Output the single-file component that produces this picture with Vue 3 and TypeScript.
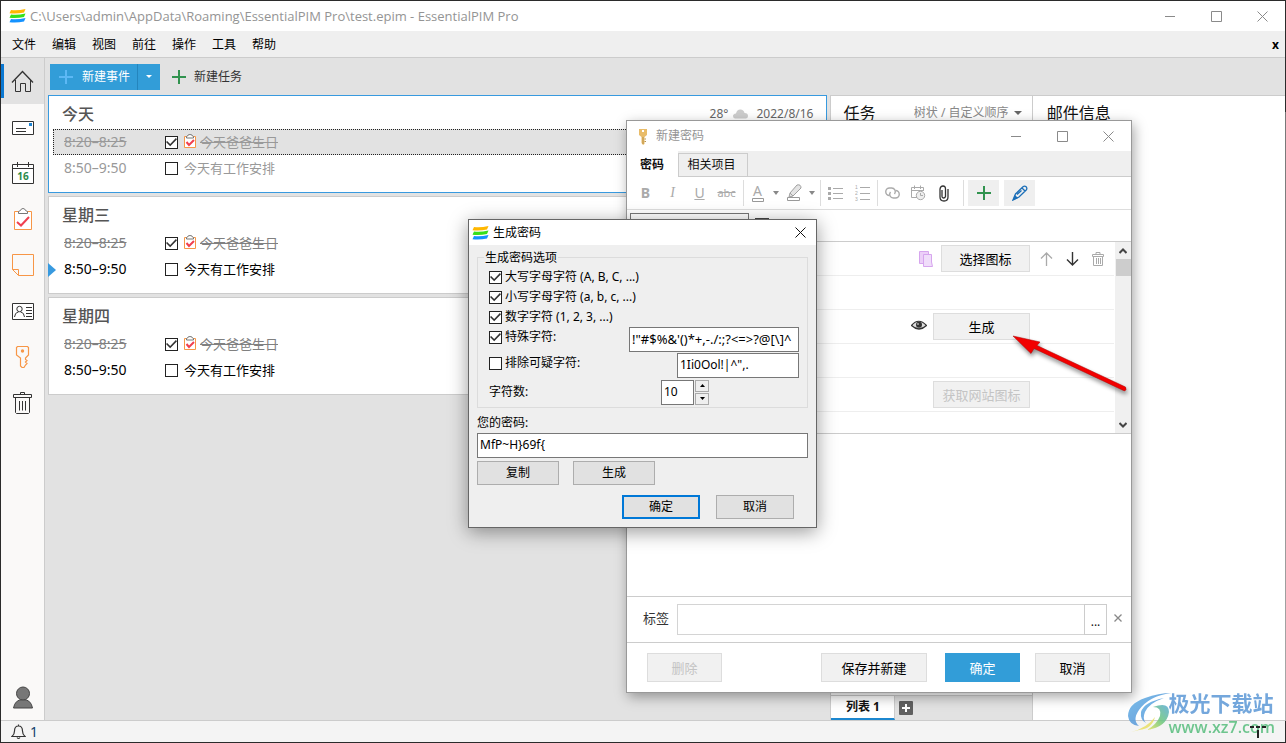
<script setup lang="ts">
import { ref } from 'vue'

interface EventRow {
  time: string
  text: string
  done: boolean
  selected?: boolean
  muted?: boolean
  now?: boolean
}
interface DayCard {
  title: string
  today?: boolean
  rows: EventRow[]
}

const menus: string[] = ['文件', '编辑', '视图', '前往', '操作', '工具', '帮助']

const days = ref<DayCard[]>([
  {
    title: '今天',
    today: true,
    rows: [
      { time: '8:20–8:25', text: '今天爸爸生日', done: true, selected: true },
      { time: '8:50–9:50', text: '今天有工作安排', done: false, muted: true },
    ],
  },
  {
    title: '星期三',
    rows: [
      { time: '8:20–8:25', text: '今天爸爸生日', done: true },
      { time: '8:50–9:50', text: '今天有工作安排', done: false, now: true },
    ],
  },
  {
    title: '星期四',
    rows: [
      { time: '8:20–8:25', text: '今天爸爸生日', done: true },
      { time: '8:50–9:50', text: '今天有工作安排', done: false },
    ],
  },
])

const upper = ref(true)
const lower = ref(true)
const digits = ref(true)
const special = ref(true)
const exclude = ref(false)
const specialChars = ref('!"#$%&\'()*+,-./:;?<=>?@[\\]^')
const similarChars = ref('1Ii0Ool!|^",.')
const count = ref('10')
const password = ref('MfP~H}69f{')
const tags = ref('')
</script>

<template>
  <div class="desktop">
    <div class="app">
      <header class="titlebar">
        <svg class="logo" width="17" height="14" viewBox="0 0 17 14">
          <path d="M2 1 Q8 2 16.500 0 L15 3.500 Q8 5 .500 4.200Z" fill="#ffb700" />
          <path d="M2 5.500 Q8 6.500 16.500 4.500 L15 8 Q8 9.500 .500 8.700Z" fill="#37e01c" />
          <path d="M2 10 Q8 11 16.500 9 L15 12.500 Q8 14 .500 13.200Z" fill="#1492ff" />
        </svg>
        <span class="path">C:\Users\admin\AppData\Roaming\EssentialPIM Pro\test.epim - EssentialPIM Pro</span>
        <div class="winctl">
          <button aria-label="最小化"><svg width="11" height="11"><path d="M0 5.500H10" /></svg></button>
          <button aria-label="最大化"><svg width="11" height="11"><path d="M.500 .500H10.500V10.500H.500Z" /></svg></button>
          <button aria-label="关闭"><svg width="11" height="11"><path d="M.500 .500L10.500 10.500M10.500 .500L.500 10.500" /></svg></button>
        </div>
      </header>

      <nav class="menubar">
        <button v-for="m in menus" :key="m">{{ m }}</button>
        <button class="closex">x</button>
      </nav>

      <div class="body">
        <aside class="side">
          <button class="active" aria-label="今天">
            <svg width="23" height="24"><g fill="none" stroke="#333"><path d="M1 13.500L11.500 2.500L22 13.500" stroke-width="1.300" /><path d="M4.500 11V22.500H9.500V14.500H14.500V22.500H19.500V11" /></g></svg>
          </button>
          <button aria-label="邮件">
            <svg width="23" height="24"><g fill="none" stroke="#333"><path d="M1.500 6.500H22.500V19.500H1.500Z" fill="#fff" /><path d="M5 13.500H15M5 16.500H15" /></g><rect x="18" y="8" width="3" height="3" fill="#1c83d2" /></svg>
          </button>
          <button aria-label="日历">
            <svg width="23" height="24"><g fill="none" stroke="#333"><path d="M1.500 3.500H22.500V22.500H1.500Z" fill="#fff" /><path d="M1.500 7.500H22.500M6.500 1V6M17.500 1V6" /></g><text x="12" y="19" class="caltext">16</text></svg>
          </button>
          <button aria-label="任务">
            <svg width="23" height="24"><path d="M3.500 4.500H20.500V22.500H3.500Z" fill="#fff" stroke="#f79646" /><path d="M7.500 6.500V4.500L9.500 3.500Q10 1.500 12 1.500T14.500 3.500L16.500 4.500V6.500Z" fill="#fff" stroke="#777" /><path d="M6 15L10 18.500L18 10" fill="none" stroke="#f04050" stroke-width="2" /></svg>
          </button>
          <button aria-label="便笺">
            <svg width="23" height="24"><path d="M1.500 1.500H22.500V22.500H7.500L1.500 16.500ZM1.500 16.500H7.500V22.500" fill="none" stroke="#f79646" /></svg>
          </button>
          <button aria-label="联系人">
            <svg width="23" height="24"><g fill="none" stroke="#333"><path d="M1.500 4.500H22.500V20.500H1.500Z" fill="#fff" /><circle cx="8.500" cy="10" r="2.700" /><path d="M3.500 18L4.500 15Q5 13.500 7.500 13M13.500 18L12.500 15Q12 13.500 9.500 13M15 8.500H21M15 11.500H21M15 14.500H21M15 17.500H21" /></g></svg>
          </button>
          <button aria-label="密码">
            <svg width="23" height="24"><path d="M6.500 1.500H16.500L17.500 2.500V10L14.500 13V14.500L16 15.500L14.500 17L16 18.500L14.500 20L13 22.500H11L9.500 21V13L5.500 10V2.500Z" fill="none" stroke="#f79646" stroke-width="1.200" /><circle cx="11.500" cy="6" r="1.700" fill="#f79646" /></svg>
          </button>
          <button aria-label="回收站">
            <svg width="23" height="24"><path d="M2.500 3.500H20.500V6.500H2.500ZM9.500 3.500V1.500H13.500V3.500M4.500 6.500V21.500L5.500 22.500H17.500L18.500 21.500V6.500M8.500 10V19.500M11.500 10V19.500M14.500 10V19.500" fill="none" stroke="#333" /></svg>
          </button>
          <button class="user" aria-label="账户">
            <svg width="23" height="24"><g fill="#777" stroke="#444"><path d="M2.500 23Q4 14.500 12 14.500T21.500 23Z" /><circle cx="12" cy="8.500" r="6.500" /></g></svg>
          </button>
        </aside>

        <main class="main">
          <div class="toolbar">
            <div class="split">
              <button class="new"><svg width="14" height="14"><path d="M7 0V14M0 7H14" stroke="#5cb8f5" stroke-width="2" /></svg>新建事件</button>
              <button class="drop" aria-label="更多"><svg width="6" height="3"><path d="M0 0H6L3 3Z" fill="#fff" /></svg></button>
            </div>
            <button class="newtask"><svg width="14" height="14"><path d="M7 0V14M0 7H14" stroke="#31934f" stroke-width="2" /></svg>新建任务</button>
          </div>

          <div class="panels">
            <section class="days">
              <article v-for="d in days" :key="d.title" class="card" :class="{ today: d.today }">
                <div class="dayhead">
                  <h2>{{ d.title }}</h2>
                  <div v-if="d.today" class="weather">
                    <span>28°</span>
                    <svg width="15" height="10"><path d="M2 9.500Q0 9 0 7Q0 5 3 4.500Q4 0 8 .500Q11 1 11.500 4Q15 4 15 7Q15 9 13 9.500Z" fill="#ccc" /></svg>
                    <span>2022/8/16</span>
                  </div>
                </div>
                <div v-for="r in d.rows" :key="r.time" class="event" :class="{ selected: r.selected, done: r.done, muted: r.muted }">
                  <svg v-if="r.now" class="now" width="8" height="14"><path d="M0 0L8 7L0 14Z" fill="#389adf" /></svg>
                  <span class="time">{{ r.time }}</span>
                  <label>
                    <input v-model="r.done" type="checkbox" />
                    <svg v-if="r.done" width="12" height="14"><path d="M.500 2.500H11.500V13.500H.500Z" fill="#fff" stroke="#f79646" /><path d="M2.500 4V2.500Q4 2 4 1Q6 0 8 1Q8 2 9.500 2.500V4Z" fill="#fff" stroke="#777" /><path d="M2.500 8L5 11L10 6" fill="none" stroke="#f04050" stroke-width="2" /></svg>
                    <span>{{ r.text }}</span>
                  </label>
                </div>
              </article>
            </section>

            <section class="tasks">
              <div class="panelhead">
                <h2>任务</h2>
                <label class="order">
                  <select aria-label="排序"><option>树状 / 自定义顺序</option></select>
                  <svg width="8" height="4"><path d="M0 0H8L4 4Z" fill="#666" /></svg>
                </label>
              </div>
              <div class="listtabs">
                <button class="on">列表 1</button>
                <button class="add" aria-label="新建列表"><svg width="14" height="14"><rect width="14" height="14" rx="1" fill="#606060" /><path d="M7 3V11M3 7H11" stroke="#fff" stroke-width="2" /></svg></button>
              </div>
            </section>

            <section class="mail"><h2>邮件信息</h2></section>
          </div>
        </main>
      </div>

      <footer class="status">
        <svg width="15" height="16"><path d="M1 12.500Q3.500 10.500 3.500 7Q3.500 2 7.500 2T11.500 7Q11.500 10.500 14 12.500ZM6 13.500Q7.500 15.500 9 13.500M7.500 .500V2" fill="none" stroke="#333" stroke-width="1.200" /></svg>
        <span>1</span>
      </footer>
    </div>

    <section class="win editor">
      <header class="wintitle">
        <svg width="10" height="17"><path d="M1 1H9V7L6.500 9V16L5 17L3.500 15V9L1 7Z" fill="#e9bc69" /><rect x="4" y="2" width="2" height="2" fill="#fff" /><path d="M5 9V16M6.500 11H8M6.500 13.500H8" stroke="#b9924a" /></svg>
        <span>新建密码</span>
        <div class="winctl">
          <button aria-label="最小化"><svg width="11" height="11"><path d="M0 5.500H10" /></svg></button>
          <button aria-label="最大化"><svg width="11" height="11"><path d="M.500 .500H10.500V10.500H.500Z" /></svg></button>
          <button aria-label="关闭"><svg width="11" height="11"><path d="M.500 .500L10.500 10.500M10.500 .500L.500 10.500" /></svg></button>
        </div>
      </header>
      <div class="tabs">
        <button class="on">密码</button>
        <button>相关项目</button>
      </div>
      <div class="fmt">
        <button><b>B</b></button>
        <button><i>I</i></button>
        <button><u>U</u></button>
        <button><s>abc</s></button>
        <span class="sep"></span>
        <button class="color"><span class="glyphA">A</span><svg width="12" height="4"><path d="M.500 .500H11.500V3.500H.500Z" fill="#fff" stroke="#999" /></svg></button>
        <button class="caret" aria-label="字体颜色"><svg width="6" height="4"><path d="M0 0H6L3 4Z" fill="#888" /></svg></button>
        <button class="color" aria-label="突出显示"><svg width="16" height="18"><path d="M3 9L10 1Q14 0 14 4L6 12L2 13ZM3 9L6 12" fill="#e4e4e4" stroke="#a0a0a0" /><path d="M.500 13.500H12.500V16.500H.500Z" fill="#fff" stroke="#999" /></svg></button>
        <button class="caret narrow" aria-label="突出显示颜色"><svg width="6" height="4"><path d="M0 0H6L3 4Z" fill="#888" /></svg></button>
        <span class="sep tight"></span>
        <button aria-label="项目符号"><svg width="15" height="13"><g fill="#aaa"><rect width="3" height="3" /><rect y="5" width="3" height="3" /><rect y="10" width="3" height="3" /><path d="M5 1h10v1H5zM5 6h10v1H5zM5 11h10v1H5z" /></g></svg></button>
        <button aria-label="编号"><svg width="15" height="19"><g fill="#aaa"><text x="0" y="5" class="num">1</text><text x="0" y="11" class="num">2</text><text x="0" y="17" class="num">3</text><path d="M5 3h10v1H5zM5 9h10v1H5zM5 15h10v1H5z" /></g></svg></button>
        <span class="sep tight"></span>
        <button class="slim" aria-label="链接"><svg width="15" height="12"><g fill="none" stroke="#aaa" stroke-width="1.400"><path d="M4.500 8.500A3.700 3.700 0 0 1 4.500 1H6.500A3.700 3.700 0 0 1 9.500 7" /><path d="M10.500 3.500A3.700 3.700 0 0 1 10.500 11H8.500A3.700 3.700 0 0 1 5.500 5" /></g></svg></button>
        <button class="slim" aria-label="插入日期"><svg width="15" height="16"><g fill="none" stroke="#aaa"><path d="M7 12.500H.500V2.500H12.500V6M.500 5.500H12.500M3.500 .500V4M9.500 .500V4" /><circle cx="9.500" cy="10.500" r="4.200" fill="#eee" /><path d="M9.500 8V10.500H12" /></g></svg></button>
        <button class="slim" aria-label="附件"><svg width="10" height="17"><path d="M3 5V11.500Q3 13 4.500 13T6.500 11.500V4Q6.500 1 4 1T1 4V12Q1 16 5 16T9 12V4" fill="none" stroke="#333" stroke-width="1.300" /></svg></button>
        <span class="sep wide"></span>
        <button class="solid" aria-label="添加字段"><svg width="14" height="14"><path d="M7 0V14M0 7H14" stroke="#31934f" stroke-width="2" /></svg></button>
        <button class="solid" aria-label="编辑字段"><svg width="16" height="16"><path d="M1 15L3.500 9L11 1.800Q12.500 .500 14.200 1.800Q15.500 3.500 14.200 5L7 12ZM10 3L13 6M5 9.500L9.500 5.500" fill="none" stroke="#1c6fb8" stroke-width="1.300" /><path d="M.500 15.500L3 10L6 13Z" fill="#1c6fb8" /></svg></button>
      </div>
      <div class="fieldbar">
        <input type="text" aria-label="字段" />
        <svg width="14" height="14"><rect width="14" height="14" fill="#444" /></svg>
      </div>
      <div class="fields">
        <div class="rows">
          <div class="row">
            <svg width="15" height="16"><path d="M.500 .500H9.500V12.500H.500Z" fill="#eccff8" stroke="#d6a5ee" /><path d="M4.500 3.500H12.500V11L13.500 15.500H4.500Z" fill="#f0ddfa" stroke="#d6a5ee" /></svg>
            <button class="flat">选择图标</button>
            <div class="tools">
              <button aria-label="上移"><svg width="13" height="14"><path d="M6.500 14V1M1 6.500L6.500 1L12 6.500" fill="none" stroke="#aaa" stroke-width="1.300" /></svg></button>
              <button aria-label="下移"><svg width="13" height="14"><path d="M6.500 0V13M1 7.500L6.500 13L12 7.500" fill="none" stroke="#333" stroke-width="1.400" /></svg></button>
              <button aria-label="删除字段"><svg width="12" height="14"><path d="M.500 2.500H11.500V4.500H.500ZM4 2V.500H8V2M1.500 4.500V13.500H10.500V4.500M4.500 6V12M6.500 6V12M8.500 6V12" fill="none" stroke="#aaa" /></svg></button>
            </div>
          </div>
          <div class="row"></div>
          <div class="row">
            <svg class="eye" width="16" height="10"><path d="M.500 5.500Q7.500 -3 15.500 5.500Q8 12.500 .500 5.500Z" fill="#ddd" stroke="#333" stroke-width="1.200" /><circle cx="8" cy="4.800" r="3" fill="#333" /><circle cx="7" cy="4" r="1" fill="#aaa" /></svg>
            <button class="flat wide">生成</button>
            <div class="tools"></div>
          </div>
          <div class="row"></div>
          <div class="row">
            <button class="flat wide" disabled>获取网站图标</button>
            <div class="tools"></div>
          </div>
          <div class="row last"></div>
        </div>
        <div class="scroll">
          <svg width="8" height="6"><path d="M.500 5L4 1.500L7.500 5" fill="none" stroke="#444" stroke-width="2" /></svg>
          <div class="thumb"></div>
          <svg width="8" height="6"><path d="M.500 1L4 4.500L7.500 1" fill="none" stroke="#444" stroke-width="2" /></svg>
        </div>
      </div>
      <div class="notes"></div>
      <div class="tagrow">
        <label for="tags">标签</label>
        <input id="tags" v-model="tags" type="text" />
        <button class="more">...</button>
        <button class="clear" aria-label="清除"><svg width="8" height="8"><path d="M.500 .500L7.500 7.500M7.500 .500L.500 7.500" stroke="#888" stroke-width="1.300" /></svg></button>
      </div>
      <div class="actions">
        <button class="flat" disabled>删除</button>
        <button class="flat save">保存并新建</button>
        <button class="flat primary">确定</button>
        <button class="flat">取消</button>
      </div>
    </section>

    <section class="win gen">
      <header class="gentitle">
        <svg width="17" height="14" viewBox="0 0 17 14">
          <path d="M2 1 Q8 2 16.500 0 L15 3.500 Q8 5 .500 4.200Z" fill="#ffb700" />
          <path d="M2 5.500 Q8 6.500 16.500 4.500 L15 8 Q8 9.500 .500 8.700Z" fill="#37e01c" />
          <path d="M2 10 Q8 11 16.500 9 L15 12.500 Q8 14 .500 13.200Z" fill="#1492ff" />
        </svg>
        <span>生成密码</span>
        <button aria-label="关闭"><svg width="11" height="11"><path d="M.500 .500L10.500 10.500M10.500 .500L.500 10.500" stroke="#111" /></svg></button>
      </header>
      <div class="genbody">
        <div class="group" role="group" aria-labelledby="gl">
          <span id="gl" class="legend">生成密码选项</span>
          <label class="opt"><input v-model="upper" type="checkbox" />大写字母字符 (A, B, C, ...)</label>
          <label class="opt"><input v-model="lower" type="checkbox" />小写字母字符 (a, b, c, ...)</label>
          <label class="opt"><input v-model="digits" type="checkbox" />数字字符 (1, 2, 3, ...)</label>
          <div class="optrow">
            <label class="opt"><input v-model="special" type="checkbox" />特殊字符:</label>
            <input v-model="specialChars" class="box chars" type="text" aria-label="特殊字符" />
          </div>
          <div class="optrow">
            <label class="opt"><input v-model="exclude" type="checkbox" />排除可疑字符:</label>
            <input v-model="similarChars" class="box similar" type="text" aria-label="可疑字符" />
          </div>
          <div class="optrow low">
            <label class="opt" for="count">字符数:</label>
            <input id="count" v-model="count" class="box count" type="text" />
            <div class="spin">
              <button aria-label="增加"><svg width="5" height="3"><path d="M0 3L2.500 0L5 3Z" /></svg></button>
              <button aria-label="减少"><svg width="5" height="3"><path d="M0 0L2.500 3L5 0Z" /></svg></button>
            </div>
          </div>
        </div>
        <label class="pwlabel" for="pw">您的密码:</label>
        <input id="pw" v-model="password" class="box pw" type="text" />
        <div class="btns">
          <button>复制</button>
          <button>生成</button>
        </div>
        <div class="btns end">
          <button class="ok">确定</button>
          <button>取消</button>
        </div>
      </div>
    </section>

    <svg class="arrow" width="126" height="70" viewBox="0 0 126 70">
      <path d="M4 6L31 12L28 15.500L116.500 57Q118 60 115.500 61L25 18.500L22 23.500Z" fill="#f20000" stroke="#a00" stroke-width=".5" />
    </svg>

    <div class="brand">
      <svg width="46" height="44" viewBox="0 0 46 44">
        <defs>
          <linearGradient id="g1" x1="0" y1="0" x2="1" y2="1"><stop offset="0" stop-color="#62b5e8" /><stop offset="1" stop-color="#4e83cf" /></linearGradient>
          <linearGradient id="g2" x1="1" y1="0" x2="0" y2="1"><stop offset="0" stop-color="#58a9d8" /><stop offset=".5" stop-color="#6cc67c" /><stop offset="1" stop-color="#efe65a" /></linearGradient>
        </defs>
        <path d="M44 1Q22 4 12 18Q5 28 12 34Q2 33 1 24Q1 12 18 6Q32 1 44 1Z" fill="url(#g1)" />
        <path d="M37 6Q22 11 18 20Q15 27 19 31Q13 28 14 20Q17 10 37 6Z" fill="url(#g1)" />
        <path d="M26 15Q42 9 42 20Q40 35 20 38Q30 32 33 24Q35 15 26 15Z" fill="url(#g2)" />
        <path d="M4 40Q20 36 28 25Q25 37 12 38Q8 39 4 40Z" fill="#e9e065" />
      </svg>
      <div class="brandtext"><strong>极光下载站</strong><span>www.xz7.com</span></div>
    </div>
    <svg class="mark" width="16" height="12"><path d="M0 1H4M6 1H10M12 1H16M8 4V12" stroke="#222" stroke-width="2" /></svg>
  </div>
</template>

<style>
html,
body,
#app {
  height: 100%;
}
body {
  margin: 0;
  overflow: hidden;
}
</style>

<style scoped>
.desktop,
.desktop * {
  box-sizing: border-box;
}
.desktop {
  position: relative;
  height: 100vh;
  overflow: hidden;
  padding: 1px;
  background: linear-gradient(#2b2b2b 112px, #777 112px, #aaa calc(100% - 22px), #2b2b2b calc(100% - 22px));
  font-family: "Noto Sans", "Noto Sans CJK SC", sans-serif;
  font-size: 12px;
  line-height: 16px;
  color: #111;
}
button,
input,
select {
  font: inherit;
  color: inherit;
  margin: 0;
  padding: 0;
  border: 0;
  border-radius: 0;
  background: none;
  outline: 0;
}
svg {
  display: block;
  flex: none;
}
h2 {
  margin: 0;
  font-size: 16px;
  line-height: 24px;
  font-weight: 400;
}
.app {
  height: 100%;
  display: flex;
  flex-direction: column;
  background: #e2e2e2;
  box-shadow: -1px 0 #2b2b2b;
}
.titlebar {
  height: 30px;
  display: flex;
  align-items: center;
  padding-left: 8px;
  gap: 4px;
  background: #fff;
  color: #949494;
}
.path {
  flex: 1;
  font-family: "Open Sans", sans-serif;
  font-size: 13px;
  white-space: nowrap;
}
.winctl {
  display: flex;
  margin-left: auto;
}
.winctl button {
  width: 46px;
  height: 29px;
  display: grid;
  place-items: center;
}
.winctl path {
  fill: none;
  stroke: #8a8a8a;
}
.menubar {
  height: 27px;
  display: flex;
  align-items: center;
  padding: 2px 6px 0 11px;
  gap: 16px;
  background: #efefef;
  border-bottom: 1px solid #ccc;
  color: #000;
}
.closex {
  margin-left: auto;
  font-weight: 700;
}
.body {
  flex: 1;
  display: flex;
  min-height: 0;
}
.side {
  width: 44px;
  display: flex;
  flex-direction: column;
  background: #faf9f8;
  border-right: 1px solid #ccc;
}
.side button {
  position: relative;
  height: 46px;
  display: grid;
  place-items: center;
}
.side .active {
  background: #e2e2e2;
}
.side .active::before {
  content: "";
  position: absolute;
  left: 0;
  top: 6px;
  width: 3px;
  height: 34px;
  background: #0a78d2;
}
.side .user {
  margin-top: auto;
}
.caltext {
  font: 700 10px "Open Sans", sans-serif;
  text-anchor: middle;
  fill: #2a8a4a;
}
.main {
  flex: 1;
  display: flex;
  flex-direction: column;
  min-width: 0;
}
.toolbar {
  height: 37px;
  display: flex;
  align-items: center;
  padding-left: 5px;
  gap: 12px;
}
.split {
  display: flex;
  height: 26px;
  background: #329dd8;
  color: #fff;
}
.new,
.newtask {
  display: flex;
  align-items: center;
  gap: 8px;
}
.new {
  width: 87px;
  padding-left: 9px;
  gap: 9px;
}
.drop {
  width: 23px;
  display: grid;
  place-items: center;
  border-left: 1px solid #2485bd;
}
.newtask {
  color: #333;
}
.panels {
  flex: 1;
  display: flex;
  min-height: 0;
  padding-left: 3px;
}
.days {
  flex: 782;
  display: flex;
  flex-direction: column;
  gap: 3px;
  margin-right: 3px;
}
.card {
  height: 98px;
  background: #fff;
  border: 1px solid #ccc;
  padding-left: 4px;
}
.today {
  border-color: #389adf;
}
.dayhead {
  height: 33px;
  display: flex;
  align-items: center;
  justify-content: space-between;
  padding: 2px 13px 0 9px;
}
.dayhead h2 {
  font-weight: 500;
  color: #555;
}
.weather {
  display: flex;
  align-items: center;
  gap: 5px;
  color: #666;
}
.weather span:last-child {
  margin-left: 3px;
}
.event {
  position: relative;
  height: 26px;
  display: flex;
  align-items: center;
  padding-left: 10px;
  border: 1px solid transparent;
  font-size: 13px;
  color: #000;
}
.now {
  position: absolute;
  left: -6px;
  top: 6px;
}
.time {
  width: 101px;
  font-size: 14px;
}
.event label {
  display: flex;
  align-items: center;
  gap: 6px;
}
.event label span {
  white-space: nowrap;
}
.event label svg {
  margin: 0 -2px 3px 0;
}
.event.done {
  color: #808080;
}
.done .time,
.done label span {
  text-decoration: line-through;
}
.event.muted {
  color: #999;
}
.event.selected {
  color: #999;
  background: #e2e2e2;
  border: 1px dotted #222;
}
input[type="checkbox"] {
  appearance: none;
  width: 13px;
  height: 13px;
  flex: none;
  background: #fff;
  border: 1px solid #222;
}
input[type="checkbox"]:checked::before {
  content: "";
  display: block;
  width: 11px;
  height: 11px;
  background: #333;
  clip-path: polygon(0 50%, 10% 40%, 38% 68%, 90% 14%, 100% 24%, 38% 88%);
}
.tasks {
  flex: 201;
  display: flex;
  flex-direction: column;
  justify-content: space-between;
  background: #fff;
  border: 1px solid #ccc;
  border-width: 1px 0 0 1px;
}
.panelhead {
  display: flex;
  align-items: center;
  justify-content: space-between;
  padding: 5px 10px 0 12px;
  white-space: nowrap;
}
.order {
  display: flex;
  align-items: center;
  gap: 5px;
  color: #888;
}
.order select {
  appearance: none;
}
.listtabs {
  height: 25px;
  display: flex;
  align-items: center;
  background: #e2e2e2;
  border-top: 1px solid #ccc;
}
.listtabs .on {
  width: 64px;
  height: 24px;
  background: #fff;
  border-bottom: 2px solid #1c87cf;
  border-right: 1px solid #ccc;
  font-weight: 700;
}
.add {
  margin-left: 4px;
}
.mail {
  flex: 253;
  background: #fff;
  border: 1px solid #ccc;
  border-width: 1px 0 0 1px;
}
.mail h2 {
  margin: 5px 14px;
}
.status {
  height: 22px;
  display: flex;
  align-items: center;
  gap: 4px;
  padding-left: 10px;
  background: #f4f4f4;
  border-top: 1px solid #ccc;
  font-size: 14px;
  color: #123e6b;
}

.win {
  position: absolute;
  display: flex;
  flex-direction: column;
  background: #fff;
}
.editor {
  left: 626px;
  top: 120px;
  width: 506px;
  height: 573px;
  border: 1px solid #999;
  box-shadow: 2px 4px 12px rgba(0, 0, 0, 0.35);
}
.wintitle {
  height: 30px;
  display: flex;
  align-items: center;
  padding-left: 11px;
  gap: 8px;
  color: #949494;
}
.tabs {
  height: 26px;
  display: flex;
  align-items: flex-end;
  background: #efefef;
}
.tabs::after {
  content: "";
  flex: 1;
  border-bottom: 1px solid #ccc;
}
.tabs button {
  width: 70px;
  height: 24px;
  padding-right: 3px;
  border: 1px solid #ccc;
}
.tabs .on {
  width: 51px;
  height: 26px;
  padding: 2px 1px 0 0;
  border: 0;
  background: #fff;
  font-weight: 700;
}
.fmt {
  height: 33px;
  display: flex;
  align-items: center;
  padding-left: 5px;
  border-bottom: 1px solid #ddd;
  color: #aaa;
  font-size: 14px;
}
.fmt button {
  width: 27px;
  height: 26px;
  display: grid;
  place-items: center;
}
.fmt i {
  font-family: "Liberation Serif", serif;
}
.fmt s {
  font-size: 11px;
}
.fmt .color {
  width: 19px;
  place-content: center;
}
.glyphA {
  line-height: 14px;
}
.fmt .caret {
  width: 18px;
}
.fmt .narrow {
  width: 15px;
}
.fmt .slim {
  width: 26px;
}
.sep {
  width: 1px;
  height: 26px;
  margin: 0 4px 0 3px;
  background: #ddd;
}
.sep.tight {
  margin: 0 1px;
}
.sep.wide {
  margin: 0 4px 0 6px;
}
.fmt .solid {
  width: 31px;
  background: #efefef;
}
.solid + .solid {
  margin-left: 5px;
}
.num {
  font: 5px "Liberation Sans", sans-serif;
}
.fieldbar {
  height: 32px;
  display: flex;
  align-items: flex-start;
  gap: 6px;
  padding: 3px;
  border-bottom: 1px solid #ccc;
}
.fieldbar input {
  width: 119px;
  height: 25px;
  border: 1px solid #777;
}
.fieldbar svg {
  margin-top: 5px;
}
.fields {
  height: 192px;
  display: flex;
  gap: 1px;
  border-bottom: 1px solid #ccc;
}
.rows {
  flex: 1;
}
.row {
  height: 34px;
  display: flex;
  align-items: center;
  justify-content: flex-end;
  gap: 7px;
  border-bottom: 1px solid #eee;
}
.row.last {
  height: 21px;
  border: 0;
}
.eye {
  margin: 0 -1px 4px 0;
}
.flat {
  width: 75px;
  height: 29px;
  background: #f1f1f1;
  border: 1px solid #ddd;
  font-size: 13px;
  color: #000;
}
.flat:disabled {
  color: #c4c4c4;
}
.row .flat {
  width: 89px;
  height: 27px;
}
.row .flat.wide {
  width: 97px;
}
.tools {
  width: 77px;
  display: flex;
  align-items: center;
  gap: 13px;
  padding-left: 3px;
}
.scroll {
  width: 16px;
  display: flex;
  flex-direction: column;
  align-items: center;
  background: #f0f0f0;
  padding: 6px 0 5px;
}
.thumb {
  width: 15px;
  height: 17px;
  margin: 5px 0 auto;
  background: #cdcdcd;
}
.notes {
  flex: 1;
}
.tagrow {
  height: 47px;
  display: flex;
  align-items: center;
  padding: 0 9px 0 16px;
  border: 1px solid #ccc;
  border-width: 1px 0;
}
.tagrow label {
  width: 34px;
  padding-bottom: 4px;
  font-size: 13px;
  color: #333;
}
.tagrow input {
  flex: 1;
  height: 31px;
  border: 1px solid #d4d4d4;
}
.more {
  width: 23px;
  height: 31px;
  margin-left: -1px;
  padding-top: 5px;
  border: 1px solid #ccc;
}
.clear {
  margin-left: 7px;
  padding-bottom: 4px;
}
.actions {
  height: 49px;
  display: flex;
  align-items: center;
  gap: 15px;
  padding: 0 21px 0 20px;
}
.actions .save {
  width: 106px;
  margin-left: auto;
}
.actions .primary {
  margin-left: 3px;
  background: #329dd8;
  border-color: #329dd8;
  color: #fff;
}

.gen {
  left: 468px;
  top: 219px;
  width: 349px;
  height: 309px;
  border: 1px solid #666;
  box-shadow: 0 4px 18px rgba(0, 0, 0, 0.4);
}
.gentitle {
  height: 25px;
  display: flex;
  align-items: center;
  gap: 4px;
  padding: 0 10px 0 3px;
  color: #000;
}
.gentitle button {
  margin-left: auto;
}
.genbody {
  flex: 1;
  display: flex;
  flex-direction: column;
  padding: 12px 8px 0;
  background: #efefef;
  color: #000;
}
.group {
  height: 151px;
  display: flex;
  flex-direction: column;
  border: 1px solid #dcdcdc;
  padding: 0 8px 0 11px;
}
.legend {
  align-self: flex-start;
  margin: -8px 0 1px -5px;
  padding: 0 1px;
  background: #efefef;
}
.opt {
  height: 20px;
  display: flex;
  align-items: center;
  gap: 3px;
}
.optrow {
  display: flex;
  height: 26px;
}
.optrow.low {
  align-items: center;
}
.box {
  height: 25px;
  padding: 0 2px 2px;
  background: #fff;
  border: 1px solid #777;
}
.optrow .box {
  margin-left: auto;
}
.chars {
  width: 170px;
  font-size: 13px;
}
.similar {
  width: 122px;
}
.optrow .count {
  width: 33px;
}
.spin {
  display: flex;
  flex-direction: column;
  gap: 1px;
  margin: 0 90px 0 1px;
}
.spin button {
  width: 14px;
  height: 12px;
  display: grid;
  place-items: center;
  border: 1px solid #aaa;
}
.pwlabel {
  margin: 7px 0 2px;
}
.btns {
  display: flex;
  gap: 14px;
  margin-top: 3px;
}
.btns button {
  width: 82px;
  height: 24px;
  background: #e1e1e1;
  border: 1px solid #adadad;
}
.btns.end {
  justify-content: flex-end;
  gap: 16px;
  margin: 10px 14px 0 0;
}
.btns.end button {
  width: 78px;
}
.btns .ok {
  border: 2px solid #0078d7;
}
.arrow {
  position: absolute;
  left: 1009px;
  top: 330px;
  filter: drop-shadow(1px 3px 2px rgba(0, 0, 0, 0.45));
}
.brand {
  position: absolute;
  right: 11px;
  bottom: 7px;
  display: flex;
  align-items: flex-end;
  opacity: 0.85;
}
.brandtext {
  display: flex;
  flex-direction: column;
  gap: 2px;
  margin-left: -4px;
  white-space: nowrap;
}
.brandtext strong {
  font-size: 21px;
  line-height: 26px;
  color: #5c98d6;
}
.brandtext span {
  font-family: "Open Sans", sans-serif;
  font-size: 16px;
  line-height: 18px;
  font-weight: 600;
  color: #57bd7d;
}
.mark {
  position: absolute;
  right: 20px;
  bottom: 5px;
}
</style>
